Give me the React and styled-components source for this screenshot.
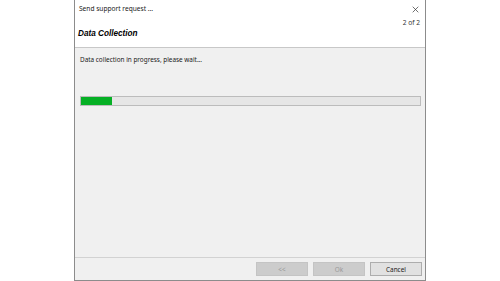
import React from "react";
import styled, { createGlobalStyle } from "styled-components";

const Global = createGlobalStyle`
  html, body { margin: 0; padding: 0; background: #ffffff; }
  body { font-family: "Noto Sans", "Liberation Sans", sans-serif; }
`;

const Page = styled.div`
  width: 500px;
  height: 281px;
  display: flex;
  padding-left: 74px;
  box-sizing: border-box;
  overflow: hidden;
`;

const Window = styled.div`
  width: 352px;
  height: 281px;
  box-sizing: border-box;
  border-left: 1px solid #8c8c8c;
  border-right: 1px solid #8c8c8c;
  border-bottom: 1px solid #8c8c8c;
  display: flex;
  flex-direction: column;
  background: #f0f0f0;
`;

const Header = styled.div`
  height: 48px;
  box-sizing: border-box;
  background: #ffffff;
  border-bottom: 1px solid #c8c8c8;
  display: flex;
  flex-direction: column;
  padding: 4px 5px 0 4px;
`;

const TitleRow = styled.div`
  display: flex;
  justify-content: space-between;
  align-items: center;
  height: 10px;
`;

const Title = styled.span`
  font-size: 6.6px;
  color: #1a1a1a;
  line-height: 10px;
`;

const Close = styled.svg`
  width: 7px;
  height: 7px;
  margin-right: 1px;
`;

const Step = styled.div`
  align-self: flex-end;
  font-size: 6.6px;
  color: #333;
  line-height: 8px;
  margin-top: 5px;
`;

const Heading = styled.div`
  font-family: "Liberation Sans", Arial, sans-serif;
  font-weight: bold;
  font-style: italic;
  font-size: 8.2px;
  color: #000;
  line-height: 10px;
  margin-top: 2px;
  margin-left: -1px;
`;

const Body = styled.div`
  flex: 1;
  display: flex;
  flex-direction: column;
  padding: 7px 4px 0 5px;
`;

const Message = styled.div`
  font-size: 6.4px;
  color: #1a1a1a;
  line-height: 9px;
`;

const Track = styled.div`
  margin-top: 32px;
  height: 10px;
  box-sizing: border-box;
  border: 1px solid #bcbcbc;
  background: #e6e6e6;
  display: flex;
`;

const Fill = styled.div`
  height: 100%;
  background: #06b025;
`;

const Footer = styled.div`
  height: 23px;
  box-sizing: border-box;
  border-top: 1px solid #d2d2d2;
  display: flex;
  justify-content: flex-end;
  align-items: center;
  gap: 5px;
  padding: 0 3px 0 0;
`;

const Button = styled.div`
  width: 52px;
  height: 14px;
  box-sizing: border-box;
  display: flex;
  align-items: center;
  justify-content: center;
  font-size: 6.4px;
  border: 1px solid ${(p) => (p.disabled ? "#c4c4c4" : "#adadad")};
  background: ${(p) => (p.disabled ? "#cccccc" : "#e1e1e1")};
  color: ${(p) => (p.disabled ? "#9a9a9a" : "#1a1a1a")};
`;

export default function App() {
  const progress = 9;
  return (
    <>
      <Global />
      <Page>
        <Window>
          <Header>
            <TitleRow>
              <Title>Send support request ...</Title>
              <Close viewBox="0 0 10 10">
                <path d="M1 1 L9 9 M9 1 L1 9" stroke="#333" strokeWidth="1" fill="none" />
              </Close>
            </TitleRow>
            <Step>2 of 2</Step>
            <Heading>Data Collection</Heading>
          </Header>
          <Body>
            <Message>Data collection in progress, please wait...</Message>
            <Track>
              <Fill style={{ width: `${progress}%` }} />
            </Track>
          </Body>
          <Footer>
            <Button disabled>&lt;&lt;</Button>
            <Button disabled>Ok</Button>
            <Button>Cancel</Button>
          </Footer>
        </Window>
      </Page>
    </>
  );
}
